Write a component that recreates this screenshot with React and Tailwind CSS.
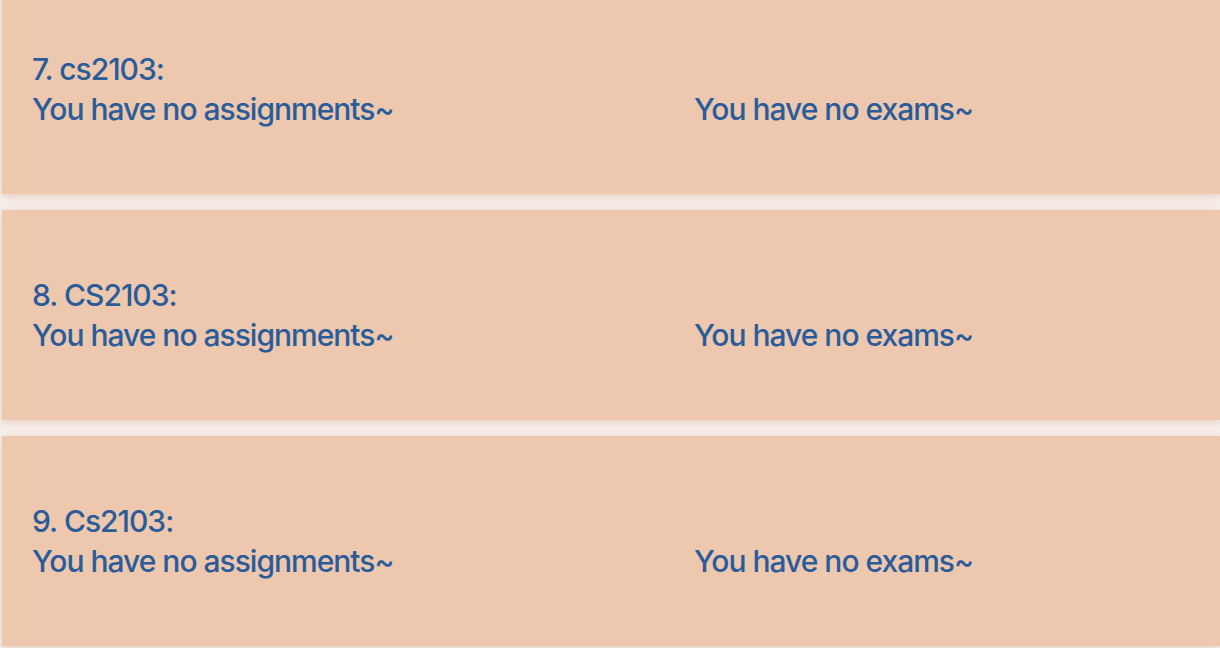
import React from 'react';

const modules = [
  { index: 7, code: 'cs2103' },
  { index: 8, code: 'CS2103' },
  { index: 9, code: 'Cs2103' },
];

function ModuleCard({ m }) {
  return (
    <div className="h-[210px] shrink-0 bg-[#eec8ae] shadow-[0_2px_8px_rgba(190,140,110,0.35)] flex items-center pl-[30px]">
      <div className="flex w-full items-end">
        <div className="w-[662px] shrink-0">
          <div className="leading-[40px]">{m.index}. {m.code}:</div>
          <div className="leading-[40px]">You have no assignments~</div>
        </div>
        <div className="leading-[40px]">You have no exams~</div>
      </div>
    </div>
  );
}

export default function App() {
  return (
    <div className="h-[648px] w-[1220px] overflow-hidden bg-[#f8efea]">
      <div
        className="flex flex-col gap-4 pl-[2px] -mt-4 text-[30px] font-medium tracking-[-1px] text-[#2a5c9a]"
        style={{ fontFamily: 'Inter, "Noto Sans", sans-serif' }}
      >
        {modules.map((m) => (
          <ModuleCard key={m.index} m={m} />
        ))}
      </div>
    </div>
  );
}
